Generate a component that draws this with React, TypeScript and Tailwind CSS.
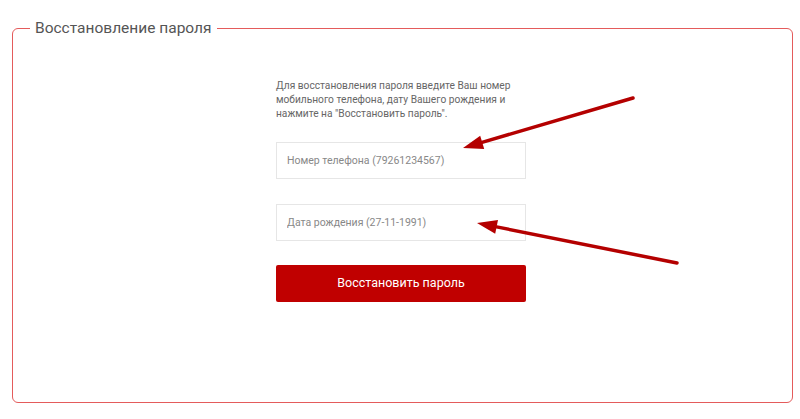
import React from 'react';

const font = { fontFamily: 'Roboto, "Noto Sans", sans-serif' };

function Arrows() {
  return (
    <svg className="absolute inset-0 pointer-events-none" width="800" height="419" viewBox="0 0 800 419">
      <line x1="633" y1="98" x2="482" y2="142.4" stroke="#b40000" strokeWidth="3.5" strokeLinecap="round" />
      <polygon points="463,148 484.2,149.1 480.2,135.7" fill="#b40000" />
      <line x1="677" y1="263" x2="496.6" y2="226.9" stroke="#b40000" strokeWidth="3.5" strokeLinecap="round" />
      <polygon points="477,223 495.2,233.8 498,220" fill="#b40000" />
    </svg>
  );
}

export default function App() {
  return (
    <div className="relative w-[800px] h-[419px] bg-white overflow-hidden" style={font}>
      <fieldset className="ml-[12px] mt-[17px] w-[781px] h-[386px] border border-[#e45b5b] rounded-[6px] pl-[17px] pr-[17px] pb-0 pt-0">
        <legend className="px-[5px] text-[15.5px] leading-[22px] text-[#555]">Восстановление пароля</legend>
        <div className="flex pt-[40px] pl-[246px]">
          <div className="w-[250px] flex flex-col">
            <p className="text-[10.2px] leading-[14px] text-[#666]">
              Для восстановления пароля введите Ваш номер<br />
              мобильного телефона, дату Вашего рождения и<br />
              нажмите на "Восстановить пароль".
            </p>
            <input
              className="mt-[21px] h-[37px] border border-[#e6e6e6] px-[10px] text-[10.5px] text-[#555] placeholder:text-[#888] outline-none"
              placeholder="Номер телефона (79261234567)"
            />
            <input
              className="mt-[25px] h-[37px] border border-[#e6e6e6] px-[10px] text-[10.5px] text-[#555] placeholder:text-[#888] outline-none"
              placeholder="Дата рождения (27-11-1991)"
            />
            <button className="mt-[24px] h-[37px] bg-[#c00000] rounded-[2px] text-white text-[12.5px]">
              Восстановить пароль
            </button>
          </div>
        </div>
      </fieldset>
      <Arrows />
    </div>
  );
}
